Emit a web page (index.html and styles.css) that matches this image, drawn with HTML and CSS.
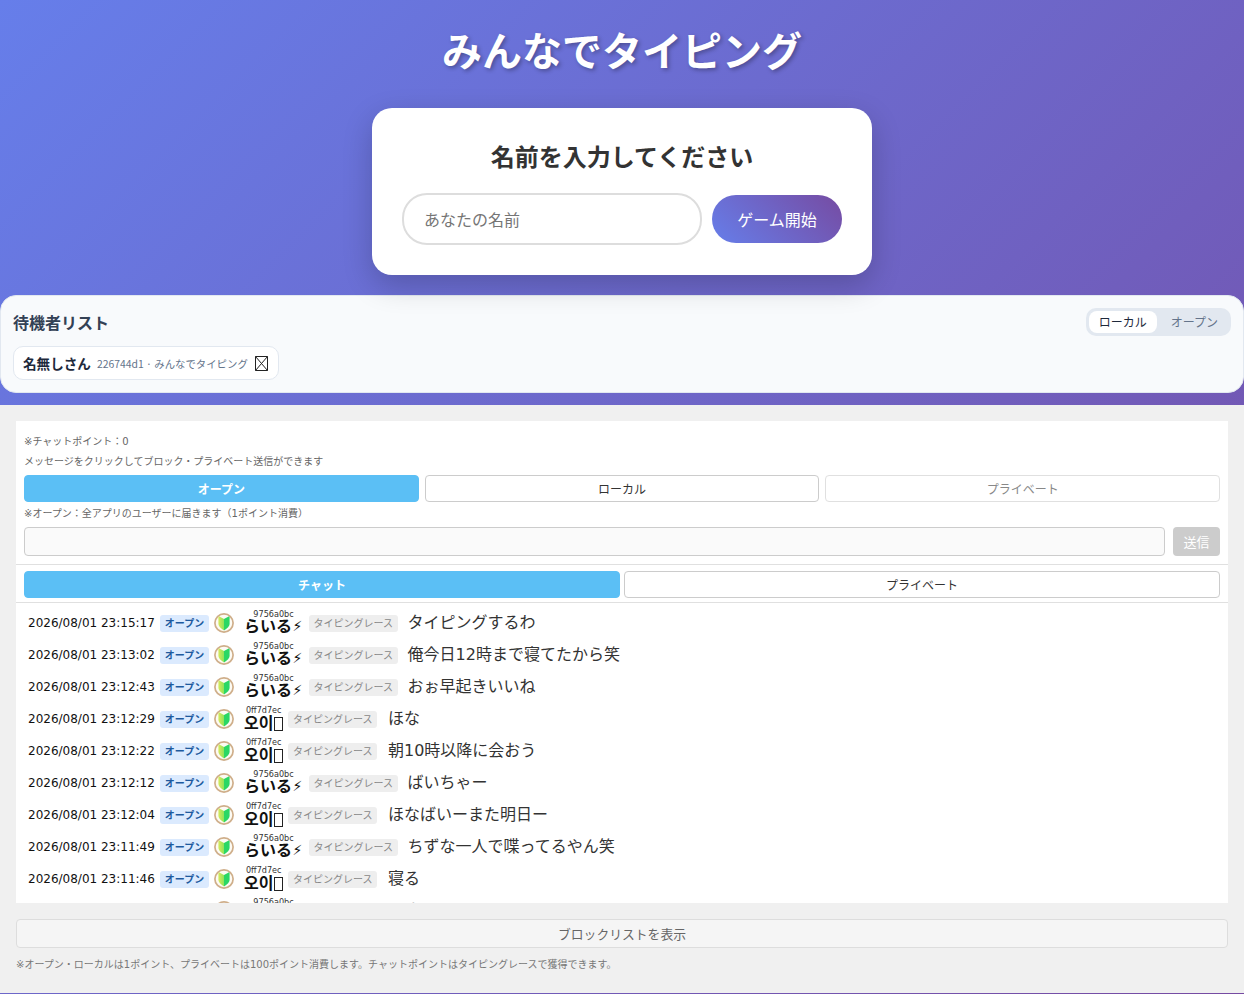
FILE: index.html
```html
<!DOCTYPE html>
<html lang="ja">
<head>
<meta charset="utf-8">
<title>みんなでタイピング</title>
<link rel="stylesheet" href="styles.css">
</head>
<body>
<svg class="defs" width="0" height="0" aria-hidden="true">
  <defs>
    <linearGradient id="leaf-left" x1="0" y1="0" x2="1" y2="0">
      <stop offset="0" stop-color="#d8ea5c"/>
      <stop offset="1" stop-color="#8fe35a"/>
    </linearGradient>
  </defs>
  <symbol id="mark" viewBox="0 0 20 20">
    <circle cx="10" cy="10" r="9.1" fill="#fdfbf4" stroke="#cfae8a" stroke-width="1.7"/>
    <path d="M10 6 L5.4 3.6 Q4.4 3.2 4.4 4.4 L4.4 11 Q4.6 14 10 17.6 Z" fill="url(#leaf-left)"/>
    <path d="M10 6 L14.6 3.6 Q15.6 3.2 15.6 4.4 L15.6 11 Q15.4 14 10 17.6 Z" fill="#2bd765"/>
  </symbol>
</svg>
<header class="hero">
  <h1 class="title">みんなでタイピング</h1>
  <section class="name-card">
    <h2 class="name-heading">名前を入力してください</h2>
    <div class="name-form">
      <input class="name-input" type="text" placeholder="あなたの名前">
      <button class="start-btn">ゲーム開始</button>
    </div>
  </section>
</header>

<section class="waiting">
  <div class="waiting-head">
    <h3 class="waiting-title">待機者リスト</h3>
    <div class="scope">
      <span class="scope-item scope-on">ローカル</span>
      <span class="scope-item">オープン</span>
    </div>
  </div>
  <div class="waiting-chip">
    <strong class="chip-name">名無しさん</strong>
    <span class="chip-meta">226744d1 · みんなでタイピング</span>
    <svg class="chip-tofu" width="13" height="15" viewBox="0 0 13 15"><path d="M.5.5h12v14H.5zM.5.5l12 14M12.5.5l-12 14" fill="none" stroke="#222" stroke-width="1"/></svg>
  </div>
</section>
<div class="band"></div>

<main class="chat-area">
  <div class="panel">
    <div class="composer">
      <p class="hint hint-first">※チャットポイント：0</p>
      <p class="hint hint-second">メッセージをクリックしてブロック・プライベート送信ができます</p>
      <div class="tabs">
        <button class="tab tab-on">オープン</button>
        <button class="tab">ローカル</button>
        <button class="tab tab-off">プライベート</button>
      </div>
      <p class="hint hint-note">※オープン：全アプリのユーザーに届きます（1ポイント消費）</p>
      <div class="send-row">
        <input class="send-input" type="text">
        <button class="send-btn">送信</button>
      </div>
    </div>
    <div class="view-tabs">
      <button class="tab tab-on">チャット</button>
      <button class="tab">プライベート</button>
    </div>
    <div class="log">
      <div class="row"><span class="time">2026/08/01 23:15:17</span><span class="scope-tag">オープン</span><svg class="mark"><use href="#mark"/></svg><span class="user"><span class="uid">9756a0bc</span><span class="uname">らいる<span class="bolt">⚡</span></span></span><span class="game">タイピングレース</span><span class="msg">タイピングするわ</span></div>
      <div class="row"><span class="time">2026/08/01 23:13:02</span><span class="scope-tag">オープン</span><svg class="mark"><use href="#mark"/></svg><span class="user"><span class="uid">9756a0bc</span><span class="uname">らいる<span class="bolt">⚡</span></span></span><span class="game">タイピングレース</span><span class="msg">俺今日12時まで寝てたから笑</span></div>
      <div class="row"><span class="time">2026/08/01 23:12:43</span><span class="scope-tag">オープン</span><svg class="mark"><use href="#mark"/></svg><span class="user"><span class="uid">9756a0bc</span><span class="uname">らいる<span class="bolt">⚡</span></span></span><span class="game">タイピングレース</span><span class="msg">おぉ早起きいいね</span></div>
      <div class="row"><span class="time">2026/08/01 23:12:29</span><span class="scope-tag">オープン</span><svg class="mark"><use href="#mark"/></svg><span class="user"><span class="uid">0ff7d7ec</span><span class="uname">오이<span class="tofu"></span></span></span><span class="game">タイピングレース</span><span class="msg">ほな</span></div>
      <div class="row"><span class="time">2026/08/01 23:12:22</span><span class="scope-tag">オープン</span><svg class="mark"><use href="#mark"/></svg><span class="user"><span class="uid">0ff7d7ec</span><span class="uname">오이<span class="tofu"></span></span></span><span class="game">タイピングレース</span><span class="msg">朝10時以降に会おう</span></div>
      <div class="row"><span class="time">2026/08/01 23:12:12</span><span class="scope-tag">オープン</span><svg class="mark"><use href="#mark"/></svg><span class="user"><span class="uid">9756a0bc</span><span class="uname">らいる<span class="bolt">⚡</span></span></span><span class="game">タイピングレース</span><span class="msg">ばいちゃー</span></div>
      <div class="row"><span class="time">2026/08/01 23:12:04</span><span class="scope-tag">オープン</span><svg class="mark"><use href="#mark"/></svg><span class="user"><span class="uid">0ff7d7ec</span><span class="uname">오이<span class="tofu"></span></span></span><span class="game">タイピングレース</span><span class="msg">ほなばいーまた明日ー</span></div>
      <div class="row"><span class="time">2026/08/01 23:11:49</span><span class="scope-tag">オープン</span><svg class="mark"><use href="#mark"/></svg><span class="user"><span class="uid">9756a0bc</span><span class="uname">らいる<span class="bolt">⚡</span></span></span><span class="game">タイピングレース</span><span class="msg">ちずな一人で喋ってるやん笑</span></div>
      <div class="row"><span class="time">2026/08/01 23:11:46</span><span class="scope-tag">オープン</span><svg class="mark"><use href="#mark"/></svg><span class="user"><span class="uid">0ff7d7ec</span><span class="uname">오이<span class="tofu"></span></span></span><span class="game">タイピングレース</span><span class="msg">寝る</span></div>
      <div class="row"><span class="time">2026/08/01 23:11:40</span><span class="scope-tag">オープン</span><svg class="mark"><use href="#mark"/></svg><span class="user"><span class="uid">9756a0bc</span><span class="uname">らいる<span class="bolt">⚡</span></span></span><span class="game">タイピングレース</span><span class="msg">おやすみ</span></div>
    </div>
  </div>
  <button class="block-btn">ブロックリストを表示</button>
  <p class="foot-note">※オープン・ローカルは1ポイント、プライベートは100ポイント消費します。チャットポイントはタイピングレースで獲得できます。</p>
</main>
</body>
</html>
```
FILE: styles.css
```css
* { box-sizing: border-box; }
html, body { margin: 0; height: 994px; overflow: hidden; }
body {
  background: linear-gradient(135deg, #667eea 0%, #764ba2 100%);
  font-family: "Noto Sans CJK JP", "Noto Sans", sans-serif;
  color: #333;
  padding-bottom: 1px;
}
.defs { position: absolute; }
button, input { font-family: inherit; margin: 0; }

.hero { display: flex; flex-direction: column; align-items: center; height: 295px; padding-top: 19px; }
.title {
  margin: 0 0 28px;
  height: 61px;
  font-size: 40px;
  line-height: 61px;
  font-weight: 700;
  color: #fff;
  text-shadow: 2px 2px 4px rgba(0,0,0,.3);
}
.name-card {
  width: 500px;
  height: 167px;
  background: #fff;
  border-radius: 20px;
  padding: 30px;
  box-shadow: 0 10px 30px rgba(0,0,0,.2);
}
.name-heading { margin: 0 0 19px; font-size: 24px; line-height: 36px; font-weight: 700; text-align: center; color: #333; height: 36px; }
.name-form { display: flex; gap: 10px; align-items: center; }
.name-input {
  width: 300px; height: 52px;
  border: 2px solid #ddd; border-radius: 25px;
  padding: 0 20px;
  font-size: 16px; color: #333; background: #fff; outline: none;
}
.name-input::placeholder { color: #757575; }
.start-btn {
  width: 130px; height: 48px;
  border: 0; border-radius: 25px;
  background: linear-gradient(45deg, #667eea, #764ba2);
  color: #fff; font-size: 16px;
}

.waiting {
  height: 98px;
  background: #f8fafc;
  border: 1px solid #e2e8f0;
  border-radius: 16px;
  padding: 12px;
}
.waiting-head { display: flex; justify-content: space-between; align-items: flex-start; height: 38px; }
.waiting-title { margin: 0; font-size: 16px; line-height: 28px; font-weight: 700; color: #334155; }
.scope { display: flex; gap: 4px; background: #e2e8f0; border-radius: 10px; padding: 3px; height: 28px; }
.scope-item { padding: 0 10px; font-size: 12px; line-height: 22px; color: #64748b; border-radius: 8px; }
.scope-on { background: #fff; color: #1e293b; }
.waiting-chip {
  display: inline-flex; align-items: center; gap: 6px;
  height: 34px; padding: 0 10px 0 9px;
  background: #fff; border: 1px solid #e2e8f0; border-radius: 10px;
}
.chip-name { font-size: 13.6px; font-weight: 700; color: #1e293b; }
.chip-meta { font-size: 10.4px; color: #64748b; margin-right: 1px; }
.band { height: 12px; }

.chat-area {
  height: 588px; background: #f0f0f0; padding: 16px 16px 0;
  font-family: "DejaVu Sans", "Noto Sans CJK JP", sans-serif;
}
.panel { height: 482px; background: #fff; overflow: hidden; }
.composer { padding: 8px 8px 0; height: 144px; border-bottom: 1px solid #e0e0e0; }
.hint { margin: 0; font-size: 10px; line-height: 16px; color: #666; }
.hint-first { margin-top: 5px; }
.hint-second { margin-top: 4px; }
.tabs { display: flex; gap: 6px; margin-top: 5px; }
.tab {
  flex: 1; height: 27px;
  border: 1px solid #ccc; border-radius: 4px;
  background: #fff; color: #333; font-size: 12px; padding: 0;
}
.tab-on { background: #5bbff5; border-color: #5bbff5; color: #fff; font-weight: 700; }
.tab-off { border-color: #e0e0e0; color: #888; }
.hint-note { margin-top: 4px; }
.send-row { display: flex; gap: 8px; margin-top: 5px; }
.send-input { flex: 1; height: 29px; border: 1px solid #ccc; border-radius: 4px; background: #fafafa; }
.send-btn { width: 47px; height: 29px; border: 0; border-radius: 4px; background: #ccc; color: #fff; font-size: 13px; padding: 0 0 1px; }
.view-tabs { display: flex; gap: 4px; padding: 6px 8px 4px; border-bottom: 1px solid #e0e0e0; height: 38px; }

.log { padding: 3px 12px 0; }
.row { display: flex; align-items: center; height: 32px; }
.time { font-size: 12px; line-height: 16px; color: #111; width: 132px; flex: none; white-space: nowrap; margin-top: 1px; }
.scope-tag {
  background: #dbeafe; color: #1e5a9e;
  font-size: 10px; font-weight: 700; line-height: 17px;
  border-radius: 3px; height: 17px;
  width: 49px; flex: none; text-align: center; white-space: nowrap;
  margin-top: 2px;
}
.mark { width: 20px; height: 20px; margin: 2px 0 0 5px; flex: none; }
.user { display: flex; flex-direction: column; align-items: center; margin-left: 10px; position: relative; height: 32px; justify-content: flex-end; }
.uid { font-family: "DejaVu Sans Condensed", "DejaVu Sans", sans-serif; font-size: 9px; line-height: 10px; color: #333; position: absolute; top: 3px; white-space: nowrap; }
.uname { font-size: 16px; font-weight: 700; color: #111; line-height: 18px; margin-bottom: 3px; white-space: nowrap; display: flex; align-items: center; margin-top: 12px; font-family: "Noto Sans CJK JP", "Noto Sans CJK KR", sans-serif; }
.bolt { font-family: "DejaVu Sans", sans-serif; font-size: 14px; font-weight: 700; width: 11px; text-align: center; margin-top: 2px; }
.tofu { display: inline-block; width: 9px; height: 14px; border: 1px solid #222; margin-left: 1px; margin-top: 4px; }
.game {
  background: #eee; color: #888;
  font-size: 10px; line-height: 17px; height: 17px;
  padding: 0 4.5px; border-radius: 3px; margin-left: 6px; white-space: nowrap;
  margin-top: 2px;
}
.user:has(.tofu) + .game { margin-left: 5px; margin-right: 1px; }
.msg { font-size: 16px; line-height: 24px; color: #333; margin-left: 10px; white-space: nowrap; margin-top: 2px; }

.block-btn {
  display: block; width: 100%; height: 29px; margin-top: 16px;
  border: 1px solid #ddd; border-radius: 4px;
  background: #f5f5f5; color: #666; font-size: 12.8px; padding: 0;
}
.foot-note { margin: 9px 0 0; font-size: 10px; line-height: 16px; color: #777; }
```
